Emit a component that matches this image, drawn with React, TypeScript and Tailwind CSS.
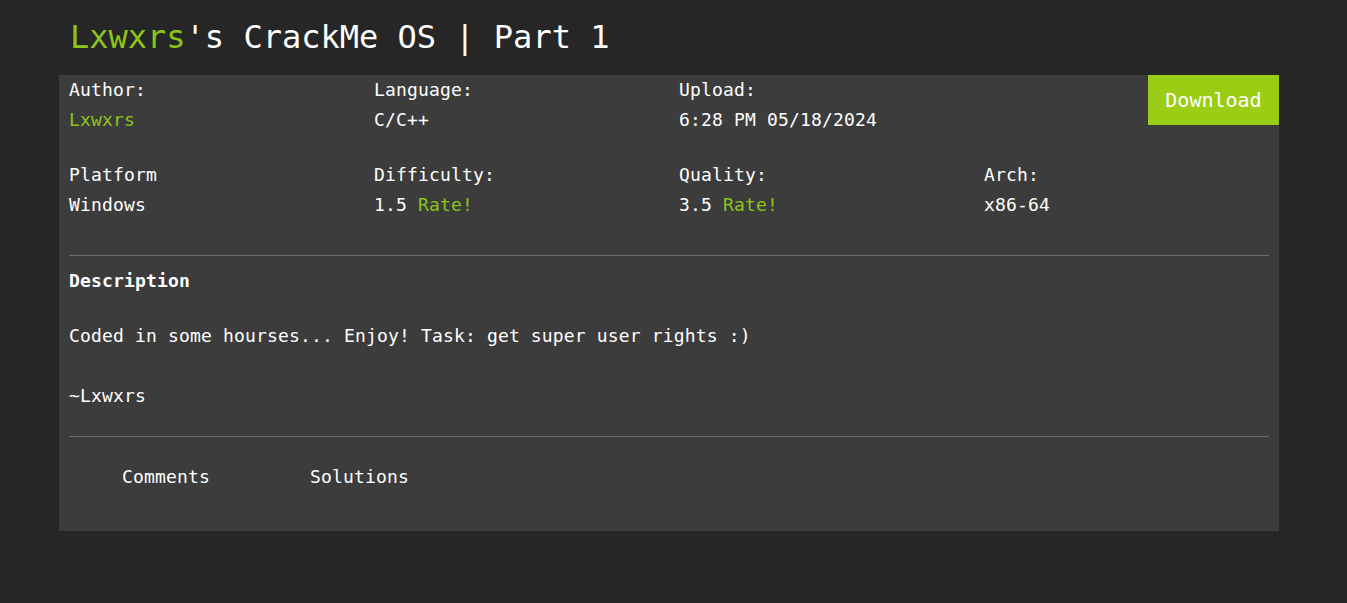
export default function App() {
  const mono = { fontFamily: '"DejaVu Sans Mono", "Liberation Mono", monospace' };

  const rowOne = [
    { label: "Author:", value: <span className="text-[#8cc31c]">Lxwxrs</span> },
    { label: "Language:", value: "C/C++" },
    { label: "Upload:", value: "6:28 PM 05/18/2024" },
  ];

  const rowTwo = [
    { label: "Platform", value: "Windows" },
    {
      label: "Difficulty:",
      value: (
        <>
          1.5 <span className="text-[#8cc31c]">Rate!</span>
        </>
      ),
    },
    {
      label: "Quality:",
      value: (
        <>
          3.5 <span className="text-[#8cc31c]">Rate!</span>
        </>
      ),
    },
    { label: "Arch:", value: "x86-64" },
  ];

  return (
    <div className="min-h-[603px] bg-[#262626] text-white" style={mono}>
      <div className="pl-[59px] pt-[14px]">
        <h1 className="pl-[11px] text-[32px] leading-[46px]">
          <span className="text-[#8cc31c]">Lxwxrs</span>'s CrackMe OS | Part 1
        </h1>

        <div className="mt-[15px] w-[1220px] bg-[#3c3c3c] pb-[39px] text-[18px] leading-[30px] tracking-[0.16px]">
          <div className="grid grid-cols-4">
            {rowOne.map((item) => (
              <div key={item.label} className="pl-[10px]">
                <div>{item.label}</div>
                <div>{item.value}</div>
              </div>
            ))}
            <div className="flex justify-end">
              <button className="h-[50px] w-[131px] bg-[#9acd14] text-[20px] tracking-normal text-white">
                Download
              </button>
            </div>
          </div>

          <div className="mt-[25px] grid grid-cols-4">
            {rowTwo.map((item) => (
              <div key={item.label} className="pl-[10px]">
                <div>{item.label}</div>
                <div>{item.value}</div>
              </div>
            ))}
          </div>

          <div className="mx-[10px] mt-[35px] border-t border-[#6b6b6b]" />

          <div className="px-[10px] pt-[10px]">
            <div className="font-bold">Description</div>
            <p className="mt-[25px]">Coded in some hourses... Enjoy! Task: get super user rights :)</p>
            <p className="mt-[30px]">~Lxwxrs</p>
          </div>

          <div className="mx-[10px] mt-[25px] border-t border-[#6b6b6b]" />

          <div className="mt-[25px] flex gap-[100px] pl-[63px]">
            <span>Comments</span>
            <span>Solutions</span>
          </div>
        </div>
      </div>
    </div>
  );
}
